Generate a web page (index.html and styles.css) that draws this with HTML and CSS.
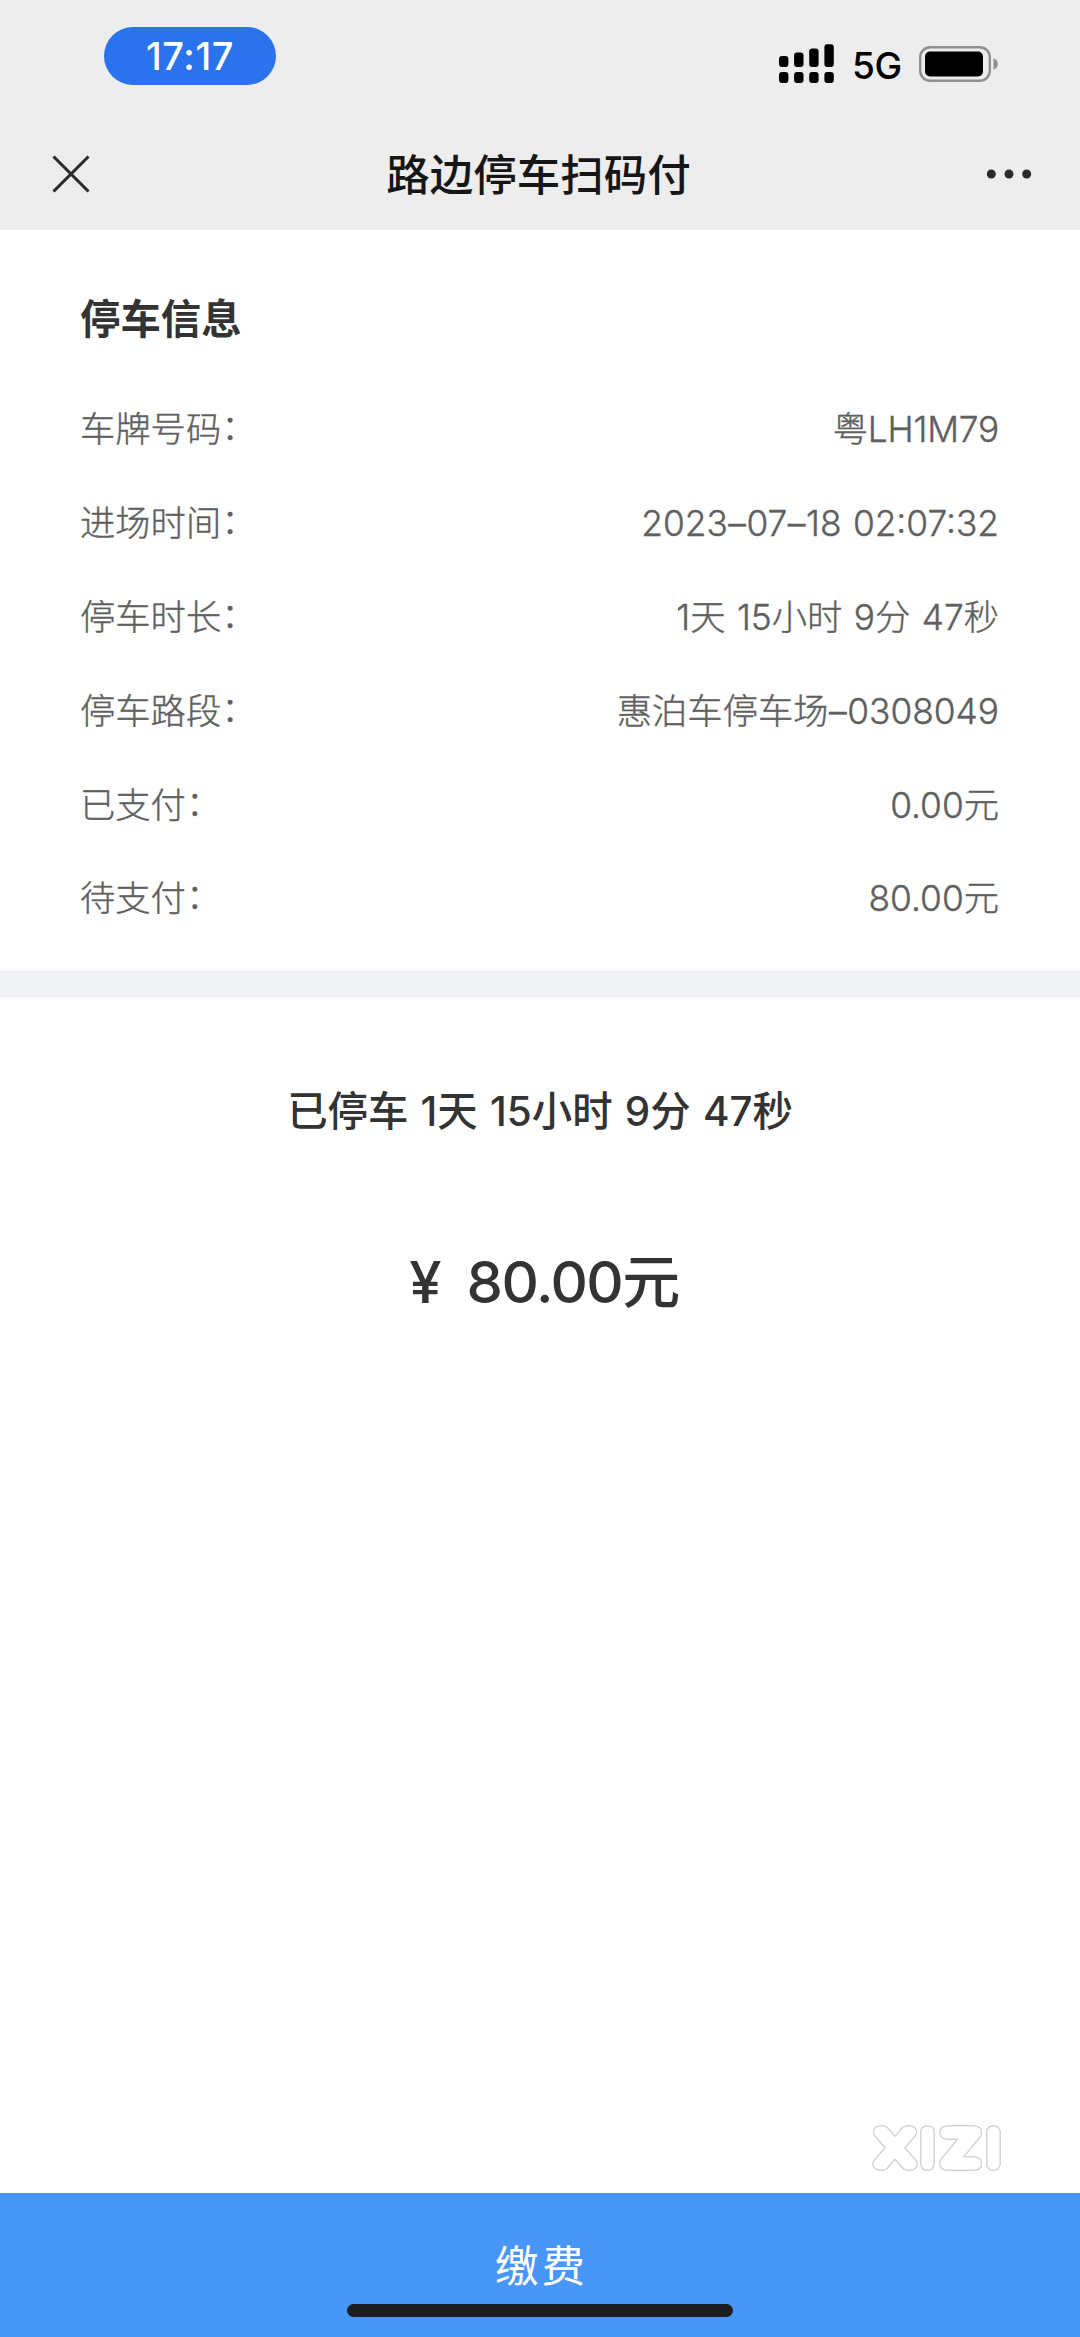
FILE: index.html
```
<!DOCTYPE html>
<html lang="zh-CN">
<head>
<meta charset="utf-8">
<title>路边停车扫码付</title>
<link rel="stylesheet" href="styles.css">
</head>
<body>
<div class="screen">
  <header class="top">
    <div class="status">
      <span class="clock">17:17</span>
      <div class="status-right">
        <svg class="signal" width="56" height="40" viewBox="0 0 56 40">
          <rect x="0" y="12" width="9.4" height="11" rx="3"/>
          <rect x="15.1" y="8.5" width="9.4" height="14.5" rx="3"/>
          <rect x="30.2" y="4.5" width="9.4" height="18.5" rx="3"/>
          <rect x="45.4" y="0.3" width="9.4" height="22.7" rx="3"/>
          <rect x="0" y="28" width="9.4" height="11" rx="3"/>
          <rect x="15.1" y="28" width="9.4" height="11" rx="3"/>
          <rect x="30.2" y="28" width="9.4" height="11" rx="3"/>
          <rect x="45.4" y="28" width="9.4" height="11" rx="3"/>
        </svg>
        <span class="network">5G</span>
        <svg class="battery" width="80" height="36" viewBox="0 0 80 36">
          <rect x="1.2" y="1.2" width="69.6" height="33.6" rx="10" fill="none" stroke="#8f8f8f" stroke-width="2.4"/>
          <rect x="6" y="5.5" width="58" height="25" rx="5" fill="#000"/>
          <path d="M74.5 12.3c2.8 1 4.3 3.2 4.3 5.7s-1.500 4.700-4.300 5.700z" fill="#8f8f8f"/>
        </svg>
      </div>
    </div>
    <nav class="nav">
      <svg width="40" height="40" viewBox="0 0 40 40"><path d="M2.500 2.500L37.500 37.500M37.500 2.500L2.500 37.500" stroke="#2a2a2a" stroke-width="3.100" fill="none"/></svg>
      <h1 class="title">路边停车扫码付</h1>
      <svg width="46" height="12" viewBox="0 0 46 12" fill="#2a2a2a"><circle cx="5.300" cy="6" r="4.500"/><circle cx="23" cy="6" r="4.500"/><circle cx="40.700" cy="6" r="4.500"/></svg>
    </nav>
  </header>

  <section class="info">
    <h2 class="info-title">停车信息</h2>
    <dl class="rows">
      <div class="row"><dt>车牌号码<span class="colon">：</span></dt><dd class="plate">粤LH1M79</dd></div>
      <div class="row"><dt>进场时间<span class="colon">：</span></dt><dd>2023<span class="dash">–</span>07<span class="dash">–</span>18 02:07:32</dd></div>
      <div class="row"><dt>停车时长<span class="colon">：</span></dt><dd>1天 15小时 9分 47秒</dd></div>
      <div class="row"><dt>停车路段<span class="colon">：</span></dt><dd>惠泊车停车场<span class="dash">–</span>0308049</dd></div>
      <div class="row"><dt>已支付<span class="colon">：</span></dt><dd>0.00元</dd></div>
      <div class="row"><dt>待支付<span class="colon">：</span></dt><dd>80.00元</dd></div>
    </dl>
  </section>

  <main class="summary">
    <p class="elapsed">已停车 1天 15小时 9分 47秒</p>
    <p class="price"><span class="yen">¥</span><span class="amount">80.00元</span></p>
    <svg class="watermark" width="140" height="56" viewBox="0 0 140 56">
      <g class="watermark-text">
        <text x="28" y="44" textLength="33" lengthAdjust="spacingAndGlyphs">X</text>
        <text x="60.500" y="44">I</text>
        <text x="93.700" y="44" textLength="35" lengthAdjust="spacingAndGlyphs">Z</text>
        <text x="126.500" y="44">I</text>
      </g>
    </svg>
  </main>

  <footer class="pay">
    <span class="pay-label">缴费</span>
    <span class="home-bar"></span>
  </footer>
</div>
</body>
</html>
```
FILE: styles.css
```
* { box-sizing: border-box; margin: 0; padding: 0; }

body {
  background: #fff;
  font-family: Inter, "Noto Sans CJK SC", sans-serif;
}

.screen {
  width: 1080px;
  height: 2337px;
  display: flex;
  flex-direction: column;
  overflow: hidden;
}

.top { height: 230px; background: #ededed; }

.status {
  height: 118px;
  display: flex;
  justify-content: space-between;
  padding: 27px 81px 0 104px;
}

.clock {
  width: 172px;
  height: 58px;
  border-radius: 29px;
  background: #2a73ec;
  color: #fff;
  font-size: 38px;
  font-weight: 450;
  line-height: 59px;
  letter-spacing: 0.600px;
  text-align: center;
}

.status-right {
  display: flex;
  align-items: center;
  height: 73px;
}

.network {
  width: 52px;
  margin: 4px 15px 0 17px;
  font-size: 37px;
  font-weight: 450;
  letter-spacing: -0.300px;
  line-height: 44px;
  color: #000;
}

.nav {
  height: 112px;
  display: flex;
  align-items: center;
  justify-content: space-between;
  padding: 0 48px 0 51px;
}

.title {
  padding-top: 1px;
  font-size: 43.500px;
  font-weight: 500;
  line-height: 60px;
  color: #161616;
}

.info {
  height: 740px;
  padding: 62px 81px 0 80px;
}

.info-title {
  font-size: 40.400px;
  font-weight: 700;
  line-height: 56px;
  color: #333;
}

.rows { margin-top: 35px; }

.row {
  height: 93.900px;
  display: flex;
  justify-content: space-between;
  align-items: center;
  font-size: 35.300px;
  font-weight: 300;
  line-height: 50px;
  word-spacing: 1.500px;
  color: #606060;
  -webkit-text-stroke: 0.400px #606060;
}

.plate { letter-spacing: -0.200px; }

.dash { margin: 0 0.500px; }

.colon {
  vertical-align: 2px;
  line-height: 1;
}

.summary {
  position: relative;
  flex: 1;
  border-top: 28px solid #f2f3f7;
  text-align: center;
  color: #333;
  font-weight: 500;
}

.elapsed {
  margin-top: 85px;
  font-size: 40.400px;
  line-height: 58px;
  word-spacing: 1.500px;
}

.price {
  display: flex;
  justify-content: center;
  margin-top: 99px;
  padding-left: 8px;
  font-size: 58px;
  line-height: 84px;
}

.yen { margin-right: 25px; }

.amount { letter-spacing: -1.500px; }

.watermark {
  position: absolute;
  left: 867px;
  bottom: 17px;
}

.watermark-text {
  font-family: Inter, sans-serif;
  font-size: 44px;
  font-weight: 100;
  text-anchor: middle;
  fill: #fff;
  stroke: #fff;
  stroke-width: 11px;
  stroke-linejoin: round;
  filter: drop-shadow(1px 0 0 #d2d2d2) drop-shadow(-1px 0 0 #d2d2d2) drop-shadow(0 1px 0 #d2d2d2) drop-shadow(0 -1px 0 #d2d2d2);
}

.pay {
  height: 144px;
  display: flex;
  flex-direction: column;
  align-items: center;
  background: #4896f8;
  color: #fff;
}

.pay-label {
  margin-top: 43px;
  font-size: 43.500px;
  font-weight: 400;
  line-height: 60px;
  letter-spacing: 3px;
  padding-left: 3px;
}

.home-bar {
  width: 386px;
  height: 13px;
  margin-top: 8px;
  border-radius: 7px;
  background: #1c1d1f;
}
```
